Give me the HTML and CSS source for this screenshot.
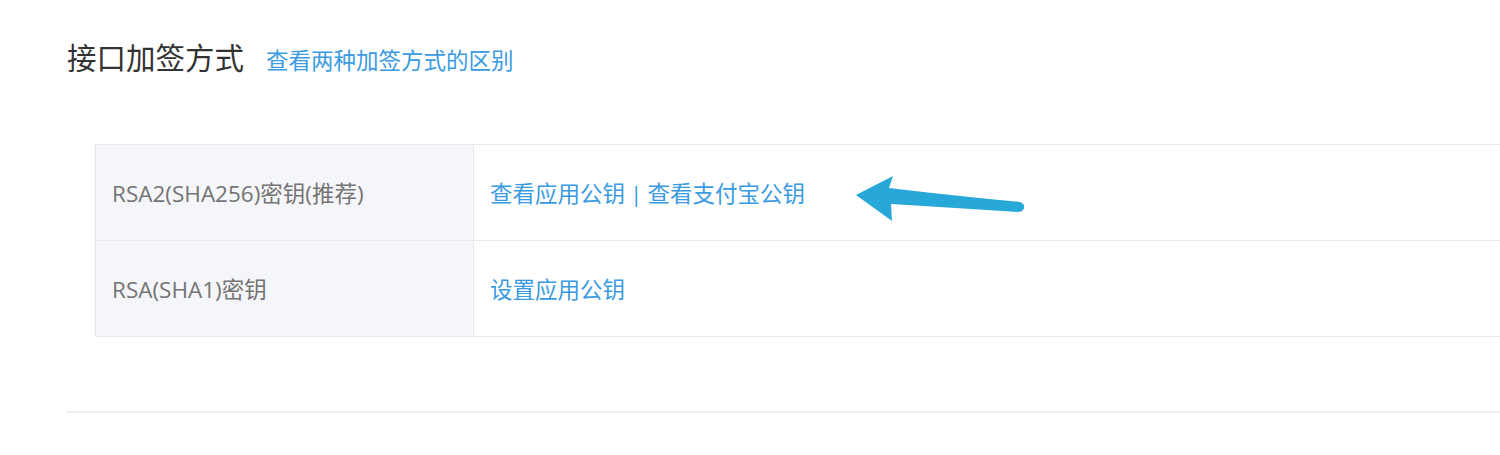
FILE: index.html
```html
<!DOCTYPE html>
<html lang="zh-CN">
<head>
<meta charset="utf-8">
<link rel="stylesheet" href="styles.css">
</head>
<body>
<div class="page">
  <div class="header">
    <h2 class="title">接口加签方式</h2>
    <a class="title-link" href="#">查看两种加签方式的区别</a>
  </div>
  <div class="table-wrap">
    <table class="keys">
      <tr>
        <td class="label">RSA2(SHA256)密钥(推荐)</td>
        <td class="value">
          <span class="links"><a href="#">查看应用公钥</a><span class="sep">|</span><a href="#">查看支付宝公钥</a></span>
          <svg class="arrow" width="180" height="60" viewBox="0 0 180 60">
            <path d="M0 19 L37 0 L33 12 Q100 20 164 26 Q169 28 168 32 Q167 36 162 36 Q100 32 35 28 L36 45 Z" fill="#28a8d8"/>
          </svg>
        </td>
      </tr>
      <tr>
        <td class="label">RSA(SHA1)密钥</td>
        <td class="value"><a href="#">设置应用公钥</a></td>
      </tr>
    </table>
  </div>
  <div class="divider"></div>
</div>
</body>
</html>
```
FILE: styles.css
```css
html, body {
  margin: 0;
  padding: 0;
  background: #fff;
  overflow: hidden;
}
.page {
  width: 1500px;
  height: 455px;
  padding: 40px 0 0 67px;
  box-sizing: border-box;
  font-family: "Open Sans", "Noto Sans CJK SC", sans-serif;
}
.header {
  display: flex;
  align-items: baseline;
  gap: 22px;
  height: 40px;
}
.title {
  margin: 0;
  font-size: 29.5px;
  font-weight: 400;
  color: #333;
  line-height: 36px;
}
.title-link {
  font-size: 22.5px;
  color: #3a9be2;
  text-decoration: none;
}
.table-wrap {
  margin: 64px 0 0 28px;
  overflow: hidden;
}
.keys {
  border-collapse: collapse;
  width: calc(100% + 4px);
  font-size: 22.5px;
}
.keys td {
  border: 1px solid #e6e8eb;
  height: 96px;
  padding: 0 16px;
  box-sizing: border-box;
  vertical-align: middle;
}
.label {
  width: 378px;
  background: #f4f6f9;
  color: #747474;
}
.value {
  position: relative;
  color: #3a9be2;
}
.value a {
  color: #3a9be2;
  text-decoration: none;
}
.sep {
  margin: 0 5px;
}
.arrow {
  position: absolute;
  left: 382px;
  top: 31px;
}
.divider {
  margin-top: 74px;
  height: 2px;
  background: #ececec;
}
```
